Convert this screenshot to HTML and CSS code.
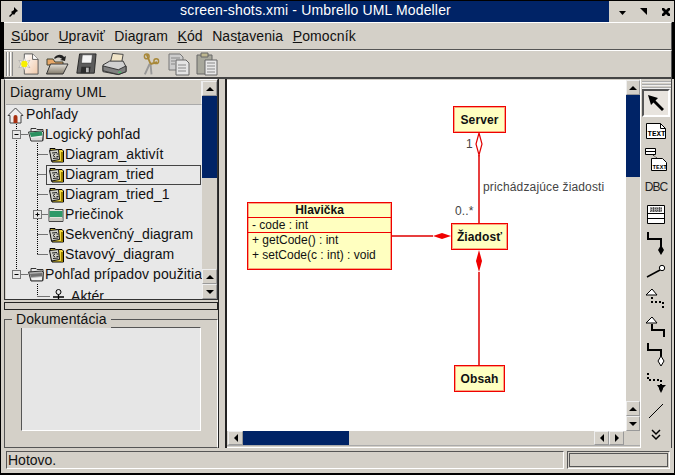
FILE: index.html
```html
<!DOCTYPE html>
<html lang="sk">
<head>
    <meta charset="UTF-8">
    <meta name="viewport" content="width=device-width, initial-scale=1.0">
    <title>Umbrello UML Modeller</title>
    <link rel="stylesheet" href="styles.css">
</head>
<body>
<svg class="defs" width="0" height="0">
    <defs>
        <linearGradient id="g-page" x1="0" y1="0" x2="1" y2="1">
            <stop offset="0" stop-color="#fff"/>
            <stop offset="1" stop-color="#f0c8a8"/>
        </linearGradient>
        <linearGradient id="g-open" x1="0" y1="0" x2="0" y2="1">
            <stop offset="0" stop-color="#e8e4dc"/>
            <stop offset="1" stop-color="#807868"/>
        </linearGradient>
    </defs>
    <symbol id="i-diagram" viewBox="0 0 16 16">
        <path d="M2 1.500h5l1 1h6l1.500 1.500v11H4z" fill="#f0d840" stroke="#000"/>
        <path d="M1.500 3.500l9-1 1 10-8 1.500z" fill="#d0d0c8" stroke="#111"/>
        <path d="M4 6l5-.5M5 11.500l5-.5M7 7L5 8.500 7 10M8.500 7h2M8.500 9.500h2" fill="none" stroke="#222"/>
        <path d="M13 5h2v10h-2z" fill="#9a8000"/>
    </symbol>
    <symbol id="i-folder-green" viewBox="0 0 16 16">
        <path d="M1 1.500h5l1 1h8v12H1z" fill="#e4e4dc" stroke="#444"/>
        <path d="M1.500 4h13v6h-13z" fill="#2f9a68"/>
        <path d="M1.500 11h13v3h-13z" fill="#c8c8c0"/>
    </symbol>
    <symbol id="i-folder-gray" viewBox="0 0 16 16">
        <path d="M3 1.500h5l1 1h6v11H3z" fill="#e8e8e8" stroke="#333"/>
        <path d="M.5 5l13-1 2 1-1 9H3z" fill="#b0b0b0" stroke="#333"/>
        <path d="M2 7l12-1v3L3 10z" fill="#707070"/>
        <path d="M3 11l11-1v3H4z" fill="#f0f0f0"/>
    </symbol>
    <symbol id="i-folder-logic" viewBox="0 0 16 16">
        <path d="M3 1.500h5l1 1h6v11H3z" fill="#e8e8e8" stroke="#333"/>
        <path d="M.5 5l13-1 2 1-1 9H3z" fill="#f0f0f0" stroke="#333"/>
        <path d="M1.500 5.500l12.500-1 .5 4L3 10z" fill="#2a9060"/>
        <path d="M3 11l11-1v3H4z" fill="#d8d8d8"/>
    </symbol>
</svg>

<div class="window">
    <header class="titlebar">
        <div class="title-pin">
            <svg width="12" height="12" viewBox="0 0 12 12"><path d="M7 1l4 4-2 1-2 3-1-1-3 3-1-1 3-3-1-1 3-2z" fill="#000"/></svg>
        </div>
        <div class="title-text">screen-shots.xmi - Umbrello UML Modeller</div>
        <div class="title-btns">
            <svg width="12" height="12" viewBox="0 0 12 12"><path d="M1 5h7L4.500 9z" fill="#000"/></svg>
            <svg width="12" height="12" viewBox="0 0 12 12"><path d="M1 2h7v7z" fill="#000"/></svg>
            <svg width="12" height="12" viewBox="0 0 12 12"><path d="M2 2l2 0 2 2 2-2 2 0 0 2-2 2 2 2 0 2-2 0-2-2-2 2-2 0 0-2 2-2-2-2z" fill="#000"/></svg>
        </div>
    </header>

    <nav class="menubar">
        <span><u>S</u>úbor</span>
        <span><u>U</u>praviť</span>
        <span>Dia<u>g</u>ram</span>
        <span><u>K</u>ód</span>
        <span>Nas<u>t</u>avenia</span>
        <span><u>P</u>omocník</span>
    </nav>

    <div class="toolbar">
        <div class="grip"></div>
        <svg class="tb-icon tb-new" width="22" height="24" viewBox="0 0 24 26">
            <path d="M8 2h9l6 6v16H8z" fill="url(#g-page)" stroke="#555"/>
            <path d="M17 2v6h6" fill="#fff" stroke="#555"/>
            <path d="M8 6l1.500 4.500L14 9l-2.500 4L14 17l-4.500-1.500L8 20l-1.500-4.500L2 17l2.500-4L2 9l4.500 1.500z" fill="#fff" stroke="#888" stroke-width=".5"/>
            <circle cx="8" cy="13" r="3.500" fill="#f8f000"/>
        </svg>
        <svg class="tb-icon tb-open" width="24" height="24" viewBox="0 0 24 24">
            <path d="M9 6c3-4 8-4 10-1l2-1-1 5-5-1 2-1c-2-2-5-2-7 0z" fill="#222"/>
            <path d="M2 7h6l2 3h8v3H2z" fill="#e8a868" stroke="#443"/>
            <path d="M1.500 22l4-10h17.500l-5 10z" fill="url(#g-open)" stroke="#333"/>
        </svg>
        <svg class="tb-icon tb-save" width="22" height="24" viewBox="0 0 24 26">
            <path d="M5 2h18l-2 21H2z" fill="#5c5c5c" stroke="#222"/>
            <path d="M8 3h11l-1 9H7z" fill="#f4f4f4" stroke="#333" stroke-width=".6"/>
            <path d="M7 16h10l-1 7H6z" fill="#2c2c2c"/>
            <path d="M12 17h3v5h-3z" fill="#bbb"/>
        </svg>
        <svg class="tb-icon tb-print" width="25" height="24" viewBox="0 0 26 24">
            <path d="M11 1l11 1-2 11H8z" fill="#f0e4c8" stroke="#444"/>
            <path d="M1 13l7-4h14l3 6v5l-8 3-16-3z" fill="#d0d0d0" stroke="#333"/>
            <path d="M1 14l16 4 8-4v6l-8 3-16-4z" fill="#808080" stroke="#333"/>
            <path d="M17 20h3v1h-3z" fill="#30e060"/>
        </svg>
        <svg class="tb-icon tb-cut" width="19" height="24" viewBox="0 0 20 24">
            <path d="M8 12L3 23M9 12l1 11" stroke="#999" stroke-width="2" fill="none"/>
            <path d="M9 12L5 2M9 12l7-2" stroke="#a88838" stroke-width="2" fill="none"/>
            <circle cx="5" cy="4" r="2.500" fill="none" stroke="#a88838" stroke-width="1.500"/>
            <circle cx="15" cy="9" r="2.500" fill="none" stroke="#a88838" stroke-width="1.500"/>
        </svg>
        <svg class="tb-icon tb-copy" width="22" height="24" viewBox="0 0 22 24">
            <path d="M1 2h11l3 3v13H1z" fill="#ccc" stroke="#777"/>
            <path d="M8 8h10l3 3v12H8z" fill="#e4e4e4" stroke="#666"/>
            <path d="M3 6h9M3 9h4M3 12h4M10 13h8M10 16h8M10 19h8" stroke="#888"/>
        </svg>
        <svg class="tb-icon tb-paste" width="22" height="24" viewBox="0 0 22 24">
            <path d="M1 3h15v19H1z" fill="#a8a89c" stroke="#666"/>
            <path d="M5 1h7v4H5z" fill="#bfb890" stroke="#666"/>
            <path d="M9 8h12v15H9z" fill="#e8e8e8" stroke="#666"/>
            <path d="M11 11h8M11 14h8M11 17h8M11 20h8" stroke="#888"/>
        </svg>
    </div>

    <div class="main">
        <aside class="sidebar">
            <section class="tree-panel">
                <div class="tree-col">
                    <div class="tree-header">Diagramy UML</div>
                    <div class="tree-list">
                        <svg class="tree-lines" width="196" height="195" viewBox="6 105 196 195">
                            <g stroke="#000" stroke-dasharray="1 1" fill="none">
                                <path d="M16.500 122V270M16.500 134.500H28M37.500 143V254.500M37.500 154.500H48M37.500 174.500H46M37.500 194.500H48M37.500 214.500H48M37.500 234.500H48M37.500 254.500H48M16.500 274.500H28M37.500 284V296M37.500 296.500H50"/>
                            </g>
                            <g fill="#e8e8e8" stroke="#777">
                                <rect x="12.500" y="130.500" width="8" height="8"/>
                                <rect x="33.500" y="210.500" width="8" height="8"/>
                                <rect x="12.500" y="270.500" width="8" height="8"/>
                            </g>
                            <path d="M14.500 134.500h4M35.500 214.500h4M37.500 212.500v4M14.500 274.500h4" stroke="#000"/>
                        </svg>
                        <div class="tree-row lvl0">
                            <svg class="tree-icon" width="17" height="17" viewBox="0 0 17 17">
                                <path d="M8.500 1L1 8.500h2V16h11V8.500h2z" fill="#eee" stroke="#444"/>
                                <path d="M6.500 16v-6a2 2 0 0 1 4 0v6z" fill="#a83010"/>
                            </svg>
                            Pohľady
                        </div>
                        <div class="tree-row lvl1"><svg class="tree-icon" width="16" height="16"><use href="#i-folder-logic"/></svg>Logický pohľad</div>
                        <div class="tree-row lvl2"><svg class="tree-icon" width="16" height="16"><use href="#i-diagram"/></svg>Diagram_aktivít</div>
                        <div class="tree-row lvl2 selected"><svg class="tree-icon" width="16" height="16"><use href="#i-diagram"/></svg>Diagram_tried</div>
                        <div class="tree-row lvl2"><svg class="tree-icon" width="16" height="16"><use href="#i-diagram"/></svg>Diagram_tried_1</div>
                        <div class="tree-row lvl2"><svg class="tree-icon" width="16" height="16"><use href="#i-folder-green"/></svg>Priečinok</div>
                        <div class="tree-row lvl2"><svg class="tree-icon" width="16" height="16"><use href="#i-diagram"/></svg>Sekvenčný_diagram</div>
                        <div class="tree-row lvl2"><svg class="tree-icon" width="16" height="16"><use href="#i-diagram"/></svg>Stavový_diagram</div>
                        <div class="tree-row lvl1"><svg class="tree-icon" width="16" height="16"><use href="#i-folder-gray"/></svg>Pohľad prípadov použitia</div>
                        <div class="tree-row actor">
                            <svg class="actor-icon" width="13" height="15" viewBox="0 0 13 15">
                                <circle cx="6.500" cy="3" r="2.500" fill="none" stroke="#000"/>
                                <path d="M6.500 5.500V11M1 8h11M6.500 11L2 14M6.500 11L11 14" stroke="#000" stroke-width="1.300" fill="none"/>
                            </svg>
                            Aktér
                        </div>
                    </div>
                </div>
                <div class="scrollbar-v">
                    <div class="sb-btn"><span class="arrow-up"></span></div>
                    <div class="sb-thumb"></div>
                    <div class="sb-track"></div>
                    <div class="sb-btn"><span class="arrow-up"></span></div>
                    <div class="sb-btn"><span class="arrow-down"></span></div>
                </div>
            </section>
            <div class="hsplit"></div>
            <section class="doc-group">
                <div class="doc-frame">
                    <span class="doc-legend">Dokumentácia</span>
                    <div class="doc-text"></div>
                </div>
            </section>
        </aside>

        <div class="vsplit"></div>

        <section class="canvas-pane">
            <div class="canvas-row">
                <div class="canvas">
                    <svg class="wires" width="399" height="351" viewBox="227 80 399 351">
                        <g stroke="#e00000" stroke-width="1.500" fill="none">
                            <path d="M479 155V223M392 236H433M479 272V365"/>
                        </g>
                        <path d="M479 133l3 11-3 11-3-11z" fill="#fff" stroke="#e00000" stroke-width="1.200"/>
                        <path d="M451 236l-9 3-9-3 9-3z" fill="#f00000"/>
                        <path d="M479 250l3 11-3 11-3-11z" fill="#f00000"/>
                    </svg>
                    <div class="box box-server">Server</div>
                    <div class="box box-request">Žiadosť</div>
                    <div class="box box-content">Obsah</div>
                    <div class="uml-class">
                        <div class="uml-name">Hlavička</div>
                        <div class="uml-attrs">- code : int</div>
                        <div class="uml-ops">+ getCode() : int<br>+ setCode(c : int) : void</div>
                    </div>
                    <span class="wire-label lbl-one">1</span>
                    <span class="wire-label lbl-many">0..*</span>
                    <span class="wire-label lbl-role">prichádzajúce žiadosti</span>
                </div>
                <div class="scrollbar-v canvas-v">
                    <div class="sb-btn"><span class="arrow-up"></span></div>
                    <div class="sb-thumb"></div>
                    <div class="sb-track"></div>
                    <div class="sb-btn"><span class="arrow-up"></span></div>
                    <div class="sb-btn"><span class="arrow-down"></span></div>
                </div>
            </div>
            <div class="scrollbar-h">
                <div class="sbh-btn"><span class="arrow-left"></span></div>
                <div class="sbh-thumb"></div>
                <div class="sbh-track"></div>
                <div class="sbh-btn"><span class="arrow-left"></span></div>
                <div class="sbh-btn"><span class="arrow-right"></span></div>
                <div class="sbh-corner"></div>
            </div>
        </section>

        <aside class="tools">
            <div class="tools-grip"></div>
            <div class="tool active">
                <svg width="20" height="20" viewBox="0 0 20 20"><path d="M2 2l10 3-2.500 2.500L18 16l-2 2-8.500-8.500L5 12z" fill="#000"/></svg>
            </div>
            <div class="tool">
                <svg width="22" height="18" viewBox="0 0 22 18">
                    <path d="M1.500 1.500h14l5 5v10h-19z" fill="#fff" stroke="#000"/>
                    <path d="M15.500 1.500v5h5" fill="none" stroke="#000"/>
                    <text x="2.500" y="14" class="note-text">TEXT</text>
                </svg>
            </div>
            <div class="tool">
                <svg width="24" height="24" viewBox="0 0 24 24">
                    <path d="M1.500 1.500h10v6h-10z" fill="#fff" stroke="#000"/>
                    <path d="M1.500 4.500h10" stroke="#000"/>
                    <path d="M9 8l5 4" stroke="#000" stroke-dasharray="1 1"/>
                    <path d="M7.500 11.500h11l4 4v8h-15z" fill="#fff" stroke="#000"/>
                    <text x="8.500" y="21.500" class="note-text note-small">TEXT</text>
                </svg>
            </div>
            <div class="tool"><span class="dbc">DBC</span></div>
            <div class="tool">
                <svg width="20" height="20" viewBox="0 0 20 20">
                    <path d="M1.500 .5h17v18h-17z" fill="#fff" stroke="#000"/>
                    <path d="M1 8.500h18M1 13.500h18" stroke="#000"/>
                    <path d="M4 2h12v5H4z" fill="#555"/>
                    <path d="M4 3h12M4 5h12M6 2v5M9 2v5M12 2v5M15 2v5" stroke="#ddd" stroke-dasharray="1 1"/>
                </svg>
            </div>
            <div class="tool">
                <svg width="20" height="24" viewBox="0 0 20 24"><path d="M2 1v7h13v9" fill="none" stroke="#000" stroke-width="2"/><path d="M15 14l3 5-3 5-3-5z" fill="#000"/></svg>
            </div>
            <div class="tool">
                <svg width="20" height="14" viewBox="0 0 20 14"><path d="M1 13l13-7" stroke="#000" stroke-width="1.500"/><circle cx="16" cy="4" r="2.700" fill="#fff" stroke="#000"/></svg>
            </div>
            <div class="tool">
                <svg width="22" height="20" viewBox="0 0 22 20"><path d="M7 0l5 6H1z" fill="#fff" stroke="#000"/><path d="M7 8v5h11v6" fill="none" stroke="#000" stroke-width="2" stroke-dasharray="2 2"/></svg>
            </div>
            <div class="tool">
                <svg width="22" height="22" viewBox="0 0 22 22"><path d="M7 1l5 6H1z" fill="#fff" stroke="#000"/><path d="M7 8v6h12v7" fill="none" stroke="#000" stroke-width="2"/></svg>
            </div>
            <div class="tool">
                <svg width="20" height="24" viewBox="0 0 20 24"><path d="M2 0v7h13v7" fill="none" stroke="#000" stroke-width="2"/><path d="M15 13l3 5-3 5-3-5z" fill="#fff" stroke="#000"/></svg>
            </div>
            <div class="tool">
                <svg width="20" height="22" viewBox="0 0 20 22"><path d="M2 1v7h13v6" fill="none" stroke="#000" stroke-width="2" stroke-dasharray="2 2"/><path d="M11 13h9l-3 3v1l-2 4-2-4v-1z" fill="#000"/></svg>
            </div>
            <div class="tool">
                <svg width="16" height="16" viewBox="0 0 16 16"><path d="M1 15L15 1" stroke="#000"/></svg>
            </div>
            <div class="tool tool-more">
                <svg width="12" height="12" viewBox="0 0 12 12"><path d="M2 1l4 4 4-4M2 6l4 4 4-4" fill="none" stroke="#000" stroke-width="1.500"/></svg>
            </div>
        </aside>
    </div>

    <footer class="statusbar">
        <div class="status-msg">Hotovo.</div>
        <div class="status-side"><div class="status-inner"></div></div>
    </footer>
</div>
</body>
</html>
```

FILE: styles.css
```css
* {
    box-sizing: border-box;
}
body {
    margin: 0;
    background: #000;
    font-family: "Liberation Sans", Arial, sans-serif;
    color: #111;
}
.defs {
    position: absolute;
}
.window {
    width: 675px;
    height: 475px;
    padding: 1px 1px 2px 1px;
    background: #000;
    display: flex;
    flex-direction: column;
    overflow: hidden;
}

/* title bar */
.titlebar {
    height: 21px;
    display: flex;
    background: #d4d0c8;
    padding-left: 3px;
    flex: none;
}
.title-pin {
    width: 18px;
    display: flex;
    align-items: center;
    justify-content: center;
}
.title-text {
    flex: 1;
    background: #002366;
    color: #fff;
    font-size: 14px;
    letter-spacing: .15px;
    line-height: 19px;
    text-align: center;
}
.title-btns {
    width: 65px;
    display: flex;
    align-items: center;
    justify-content: space-between;
    padding: 0 2px 0 9px;
}

/* menu + toolbar */
.menubar {
    height: 28px;
    flex: none;
    margin: 0 2px 0 3px;
    padding-left: 7px;
    display: flex;
    align-items: center;
    background: #d4d0c8;
    border-top: 1px solid #fff;
    border-bottom: 1px solid #555;
    border-right: 1px solid #555;
    font-size: 14px;
    letter-spacing: .1px;
}
.menubar span {
    margin-right: 9.500px;
}
.toolbar {
    height: 29px;
    flex: none;
    margin: 0 2px 0 3px;
    padding-left: 2px;
    display: flex;
    align-items: center;
    background: #d4d0c8;
    border-top: 1px solid #fff;
    border-bottom: 2px solid #444;
    border-right: 1px solid #555;
}
.grip {
    width: 7px;
    height: 24px;
    margin-right: 4px;
    background: repeating-linear-gradient(90deg, #888 0 1px, #fff 1px 2px, #d4d0c8 2px 3px);
}
.tb-icon {
    flex: none;
    margin-right: 6px;
}
.tb-save {
    margin-right: 5px;
}
.tb-print {
    margin-right: 15px;
}
.tb-cut {
    margin-right: 7px;
}

/* main area */
.main {
    flex: 1;
    min-height: 0;
    display: flex;
    background: #d4d0c8;
    padding-left: 3px;
}
.sidebar {
    width: 214px;
    flex: none;
    display: flex;
    flex-direction: column;
}
.tree-panel {
    height: 221px;
    flex: none;
    display: flex;
    border: 1px solid #333;
    border-top: 1px solid #fff;
    padding: 1px 0 0 1px;
    background: #d4d0c8;
}
.tree-col {
    width: 196px;
    flex: none;
    display: flex;
    flex-direction: column;
}
.tree-header {
    height: 24px;
    flex: none;
    padding-left: 4px;
    font-size: 14px;
    letter-spacing: .25px;
    line-height: 23px;
    background: #d4d0c8;
    border-right: 1px solid #eee;
    border-bottom: 1px solid #aaa;
}
.tree-list {
    position: relative;
    flex: 1;
    overflow: hidden;
    background: #e8e8e8;
}
.tree-lines {
    position: absolute;
    left: 0;
    top: 0;
}
.tree-row {
    height: 20px;
    position: relative;
    display: flex;
    align-items: center;
    padding-bottom: 2px;
    font-size: 14px;
    letter-spacing: .08px;
    white-space: nowrap;
}
.tree-icon {
    flex: none;
    margin-top: 2px;
    margin-right: 1px;
}
.lvl0 {
    padding-left: 1px;
}
.lvl0 .tree-icon {
    margin-right: 2px;
}
.lvl1 {
    padding-left: 22px;
}
.lvl2 {
    padding-left: 42px;
}
.selected {
    width: 155px;
    margin-left: 40px;
    padding-left: 1px;
    border: 1px solid #444;
}
.actor {
    padding: 2px 0 0 46px;
}
.actor-icon {
    flex: none;
    margin-right: 6px;
}

/* scrollbars */
.scrollbar-v {
    width: 15px;
    flex: none;
    display: flex;
    flex-direction: column;
    background: #d4d0c8;
}
.canvas-v {
    width: 14px;
}
.sb-btn {
    height: 15px;
    flex: none;
    display: flex;
    align-items: center;
    justify-content: center;
    background: #d4d0c8;
    border: 1px solid #eee;
    border-right-color: #999;
    border-bottom-color: #999;
}
.sb-thumb {
    height: 82px;
    flex: none;
    background: #002366;
}
.sb-track {
    flex: 1;
    background: #d4d0c8;
}
.arrow-up {
    border: 4px solid transparent;
    border-top: 0;
    border-bottom: 4px solid #000;
}
.arrow-down {
    border: 4px solid transparent;
    border-bottom: 0;
    border-top: 4px solid #000;
}
.arrow-left {
    border: 4px solid transparent;
    border-left: 0;
    border-right: 4px solid #000;
}
.arrow-right {
    border: 4px solid transparent;
    border-right: 0;
    border-left: 4px solid #000;
}
.hsplit {
    height: 8px;
    flex: none;
    margin-top: 2px;
    border: 1px solid #222;
    background: #d4d0c8;
}
.doc-group {
    flex: 1;
    min-height: 0;
    padding-top: 9px;
}
.doc-frame {
    height: 100%;
    position: relative;
    border: 1px solid #555;
    border-right-color: #fff;
    padding: 7px 16px 14px 16px;
}
.doc-legend {
    position: absolute;
    top: -10px;
    left: 7px;
    padding: 0 4px;
    background: #d4d0c8;
    font-size: 14px;
    letter-spacing: .1px;
    line-height: 18px;
}
.doc-text {
    height: 104px;
    background: #e6e6e6;
    border: 1px solid #555;
    border-right-color: #fff;
    border-bottom-color: #fff;
}
.vsplit {
    width: 9px;
    flex: none;
    border: solid #222;
    border-width: 0 2px 0 1px;
    background: #d4d0c8;
}

/* canvas */
.canvas-pane {
    width: 414px;
    flex: none;
    display: flex;
    flex-direction: column;
    border-right: 1px solid #fff;
    border-bottom: 1px solid #fff;
}
.canvas-row {
    height: 352px;
    flex: none;
    display: flex;
    padding-top: 1px;
}
.canvas {
    width: 399px;
    position: relative;
    background: #fff;
    flex: none;
    overflow: hidden;
}
.wires {
    position: absolute;
    left: 0;
    top: 0;
}
.box, .uml-class {
    position: absolute;
    background: #ffffc0;
    border: 1px solid #f00000;
    box-shadow: inset 0 0 0 1px rgba(240, 0, 0, .35);
}
.box {
    display: flex;
    align-items: center;
    justify-content: center;
    font-size: 12px;
    font-weight: bold;
    letter-spacing: .1px;
}
.box-server {
    left: 226px;
    top: 26px;
    width: 53px;
    height: 27px;
}
.box-request {
    left: 224px;
    top: 143px;
    width: 57px;
    height: 27px;
}
.box-content {
    left: 227px;
    top: 285px;
    width: 51px;
    height: 27px;
}
.uml-class {
    left: 20px;
    top: 122px;
    width: 145px;
    height: 68px;
    font-size: 12px;
}
.uml-name {
    height: 15px;
    line-height: 14px;
    text-align: center;
    font-weight: bold;
    border-bottom: 1px solid #f00000;
}
.uml-attrs {
    height: 15px;
    line-height: 14px;
    padding-left: 4px;
    border-bottom: 1px solid #f00000;
}
.uml-ops {
    padding-left: 4px;
    line-height: 15px;
}
.wire-label {
    position: absolute;
    font-size: 12px;
    color: #444;
    letter-spacing: .15px;
    line-height: 12px;
    white-space: nowrap;
}
.lbl-one {
    left: 239px;
    top: 58px;
}
.lbl-many {
    left: 228px;
    top: 125px;
}
.lbl-role {
    left: 256px;
    top: 101px;
}
.scrollbar-h {
    height: 15px;
    flex: none;
    display: flex;
    padding-left: 1px;
    border-bottom: 1px solid #aaa;
}
.sbh-btn {
    width: 15px;
    flex: none;
    display: flex;
    align-items: center;
    justify-content: center;
    border: 1px solid #eee;
    border-right-color: #999;
    border-bottom-color: #999;
}
.sbh-thumb {
    width: 106px;
    flex: none;
    background: #002366;
}
.sbh-track {
    flex: 1;
}
.sbh-corner {
    width: 16px;
    flex: none;
}

/* uml tools */
.tools {
    width: 31px;
    flex: none;
    display: flex;
    flex-direction: column;
    align-items: center;
    border-right: 1px solid #444;
    padding-top: 2px;
}
.tools-grip {
    width: 29px;
    height: 8px;
    flex: none;
    background: repeating-linear-gradient(180deg, #aaa 0 1px, #eee 1px 2px, #d4d0c8 2px 3px);
}
.tool {
    width: 28px;
    height: 28px;
    flex: none;
    display: flex;
    align-items: center;
    justify-content: center;
}
.tool-more {
    height: 20px;
}
.tool.active {
    background: #e8e4de;
    border: 2px solid;
    border-color: #555 #fff #fff #555;
}
.note-text {
    font-family: "Liberation Mono", monospace;
    font-size: 7.500px;
    font-weight: bold;
}
.note-small {
    font-size: 6px;
}
.dbc {
    font-size: 12px;
    letter-spacing: -1px;
    color: #222;
}

/* status bar */
.statusbar {
    height: 25px;
    flex: none;
    display: flex;
    gap: 3px;
    padding: 3px 4px 4px 5px;
    background: #d4d0c8;
}
.status-msg {
    width: 558px;
    border: 1px solid #555;
    border-right-color: #fff;
    border-bottom-color: #fff;
    font-size: 14px;
    line-height: 17px;
    padding-left: 1px;
}
.status-side {
    flex: 1;
    border: 1px solid #fff;
    border-left-color: #555;
    border-top-color: #555;
    padding: 1px;
}
.status-inner {
    height: 100%;
    border: 1px solid #555;
}
```
